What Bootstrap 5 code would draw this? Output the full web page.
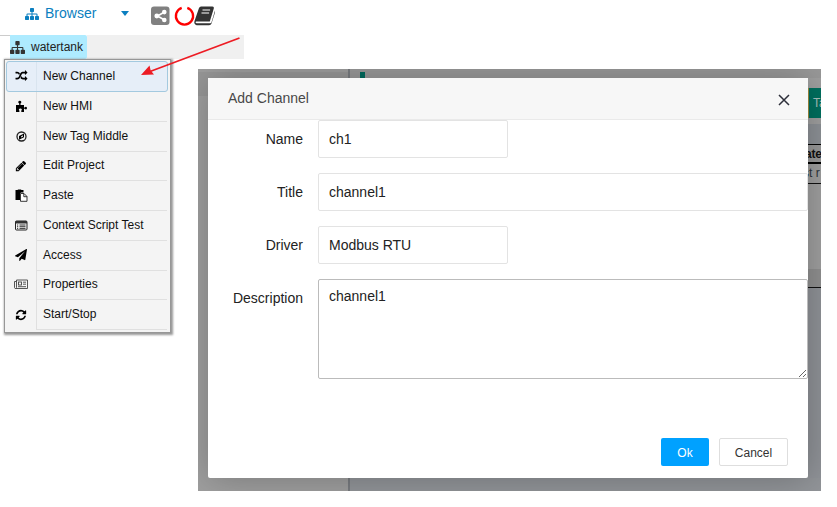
<!DOCTYPE html>
<html lang="en">
<head>
<meta charset="utf-8">
<title>Add Channel</title>
<link href="https://cdn.jsdelivr.net/npm/bootstrap@5.3.0/dist/css/bootstrap.min.css" rel="stylesheet">
<style>
body{font-family:"Liberation Sans",Arial,sans-serif;font-size:14px;color:#333;background:#fff;width:837px;height:507px}
svg{display:block;flex:none}
.topbar{height:35px;padding:0 0 8px 25px;color:#0b7fc0}
.topbar .caret{margin-left:25px;border:4.5px solid transparent;border-top:5px solid #0b7fc0;border-bottom:0}
.treebar{height:24px;width:244px;font-size:12px}
.treebar .lead-line{width:10px;border-top:1px solid #ccc}
.tree-node{background:#aeebff;width:77px;gap:6px;border-radius:0 2px 2px 0;color:#222}
.tree-rest{background:#f0f0f0}
.ctx{width:167px;height:274px;margin-left:4px;padding:1px;border:1px solid #979797;background:#f4f4f4;box-shadow:1px 1px 2px 1px #999;font-size:12px;color:#111}
.ctx-item{height:29.75px;width:161px}
.ctx-item .ico{width:31px;padding:0 0 1px 9px;border-right:1px solid #e0e0e0}
.ctx-item .lbl{border-bottom:1px solid #e0e0e0;padding:0 0 1px 6px}
.ctx-item.hot{height:31px;width:162px;background:#e6eef8;border:1px solid #a3c9df;border-radius:3px}
.ctx-item.hot .ico{width:30px;padding:0 0 1px 8px;border-color:#d9e4ef}
.ctx-item.hot .lbl{border:0;padding:0 0 2px 6px}
.workspace{width:623px;height:422px;margin:10px 0 0 27px;background:#a0a0a0}
.ws-left{width:150px;background:#9f9f9f}
.ws-left .ws-head{height:27px;background:#979797;border-top:3px solid #9e9e9e}
.ws-split{width:2px;background:#797c80}
.ws-strip{height:9px;padding:3px 0 0 10px;background:#999}
.ws-strip .tab-edge{width:5px;height:6px;background:#006b5e}
.ws-side{width:21px;font-size:12px;line-height:18px;color:#111}
.ws-side>*{padding-left:8px;white-space:nowrap}
.ws-side .tag-tab{height:30px;margin-top:10px;background:linear-gradient(90deg,#00705f 8px,#a08d40 8px,#a08d40 9px,#00705f 9px);color:#a9c0bc;padding:6px 0 0 13px}
.ws-side .gap-a{height:26px;background:linear-gradient(#a0a0a0 6px,#8e9297 6px)}
.ws-side .c-head{height:20px;padding-left:5px;border-top:1px solid #000;border-bottom:2px solid #000;font-weight:bold;background:#9a9a9a;letter-spacing:-.2px}
.ws-side .c-cell{height:20px;padding-left:3px;border-bottom:1px solid #111;color:#2d333a}
.ws-side .gap-b{height:85px;background:#a0a0a0}
.ws-side .gap-c{height:19px;background:#919191;border-bottom:1px solid #111}
.ws-side .gap-d{background:#909398}
.ws-bottom{height:13px;background:#929599}
.dialog{left:10px;top:9px;width:600px;height:400px;background:#fff;border-radius:2px;box-shadow:1px 1px 36px rgba(0,0,0,.25);color:#222}
.dialog-title{height:42px;padding:0 18px 0 20px;background:#f7f7f7;border-bottom:1px solid #eaeaea;color:#484848}
.field{margin-bottom:15px}
.field label{flex:none;width:110px;padding:9px 15px 0 0;text-align:right;line-height:20px}
.dialog .form-control{height:38px;border:1px solid #e3e3e3;border-radius:2px;padding:0 10px;font-size:14px;color:#222;box-shadow:none}
.dialog .form-control.short{width:190px;flex:none}
.dialog textarea.form-control{height:100px;min-height:0;border-color:#bbb;padding:6px 10px;line-height:20px;resize:vertical}
.actions{padding:0 20px 12px 0;gap:10px}
.actions .btn{height:28px;padding:1px 0 0;font-size:12px;border-radius:2px;line-height:24px}
.ok{width:48px;background:#00a1ff;color:#fff}
.cancel{width:69px;background:#fff;border-color:#dedede;color:#333}
.pointer{left:136px;top:32px}
</style>
</head>
<body class="overflow-hidden position-relative">
<svg width="0" height="0" class="position-absolute"><defs>
<path id="sitemap" d="M1792 1248v320q0 40-28 68t-68 28h-320q-40 0-68-28t-28-68v-320q0-40 28-68t68-28h96v-192h-512v192h96q40 0 68 28t28 68v320q0 40-28 68t-68 28h-320q-40 0-68-28t-28-68v-320q0-40 28-68t68-28h96v-192h-512v192h96q40 0 68 28t28 68v320q0 40-28 68t-68 28h-320q-40 0-68-28t-28-68v-320q0-40 28-68t68-28h96v-192q0-52 38-90t90-38h512v-192h-96q-40 0-68-28t-28-68v-320q0-40 28-68t68-28h320q40 0 68 28t28 68v320q0 40-28 68t-68 28h-96v192h512q52 0 90 38t38 90v192h96q40 0 68 28t28 68z"/>
</defs></svg>

<header class="topbar d-flex align-items-center">
  <svg width="14" height="14" viewBox="0 0 1792 1792" fill="currentColor"><use href="#sitemap"/></svg>
  <span style="margin-left:6px">Browser</span>
  <span class="caret"></span>
  <svg width="66" height="22" viewBox="149 4 66 22" style="margin:4px 0 0 20px">
    <rect x="151" y="5.500" width="18.500" height="18.500" rx="3" fill="#808080"/>
    <path d="M164.500 11l-7 4 7 4" fill="none" stroke="#fff" stroke-width="1.600"/>
    <g fill="#fff"><circle cx="164.300" cy="11.100" r="2.300"/><circle cx="156.800" cy="15" r="2.400"/><circle cx="164.300" cy="19" r="2.300"/></g>
    <path d="M187.300 6.800a8.600 8.600 0 1 1-5.600 0" fill="none" stroke="#f00" stroke-width="2.300"/>
    <path d="M201 5.500h11.500q1.800 0 1.300 2l-4 13H196q-1.300 1 .5 1.700h13.700q1 0 1.300-1L215 9.500v2l-3.500 11q-.6 1.800-2.400 1.800h-12.500q-3.200-1.500-2-4.500L199 7.100q.6-1.600 2-1.600z" fill="#333"/>
    <path d="M202.500 9h7.600M201.500 12h7.600" stroke="#fff" stroke-width="1.200"/>
  </svg>
</header>

<div class="treebar d-flex">
  <div class="lead-line"></div>
  <div class="tree-node d-flex align-items-center">
    <svg width="15" height="15" viewBox="0 0 1792 1792" fill="#333"><use href="#sitemap"/></svg>
    <span>watertank</span>
  </div>
  <div class="tree-rest flex-grow-1"></div>
</div>

<main class="d-flex align-items-start">
  <nav class="ctx">
    <div class="ctx-item hot d-flex"><div class="ico d-flex align-items-center"><svg width="13" height="12" viewBox="0 0 1792 1792"><path d="M666 481q-60 92-137 273-22-45-37-72.500t-40.500-63.500-51-56.500-63-35-81.500-14.500h-224q-14 0-23-9t-9-23v-192q0-14 9-23t23-9h224q250 0 410 225zm1126 799q0 14-9 23l-320 320q-9 9-23 9-13 0-22.500-9.500t-9.500-22.500v-192q-32 0-85 .5t-81 1-73-1-71-5-64-10.500-63-18.500-58-28.500-59-40-55-53.500-56-69.500q59-93 136-273 22 45 37 72.500t40.500 63.500 51 56.500 63 35 81.500 14.500h256v-192q0-14 9-23t23-9q12 0 24 10l319 319q9 9 9 23zm0-896q0 14-9 23l-320 320q-9 9-23 9-13 0-22.500-9.500t-9.500-22.500v-192h-256q-48 0-87 15t-69 45-51 61.500-45 77.500q-32 62-78 171-29 66-49.500 111t-54 105-64 100-74 83-90 68.500-106.500 42-128 16.500h-224q-14 0-23-9t-9-23v-192q0-14 9-23t23-9h224q48 0 87-15t69-45 51-61.500 45-77.500q32-62 78-171 29-66 49.500-111t54-105 64-100 74-83 90-68.500 106.500-42 128-16.500h256v-192q0-14 9-23t23-9q12 0 24 10l319 319q9 9 9 23z"/></svg></div><div class="lbl flex-grow-1 d-flex align-items-center">New Channel</div></div>
    <div class="ctx-item d-flex"><div class="ico d-flex align-items-center"><svg width="13" height="13" viewBox="0 0 13 13"><path d="M1 5h3.200V3.500Q3 2.800 3.300 1.700 3.700.8 4.800.8t1.500.9q.3 1.100-.8 1.800V5H9v2.600h.8q.4-.9 1.200-.8 1 .2 1 1.300T11 9.500q-.8.100-1.200-.7H9V12H6.300v-1.500q.6-.5.500-1.200Q6.500 8.500 5.400 8.500t-1.500.8q-.2.700.5 1.200V12H1z"/></svg></div><div class="lbl flex-grow-1 d-flex align-items-center">New HMI</div></div>
    <div class="ctx-item d-flex"><div class="ico d-flex align-items-center"><svg width="13" height="13" viewBox="0 0 13 13"><circle cx="6.500" cy="6.500" r="4.500" fill="none" stroke="#222" stroke-width="1.300"/><path fill-rule="evenodd" d="M9 3.500v3.800L4 9.800V6zM7.900 5.300L6.200 6.200v1.400l1.700-.9z"/></svg></div><div class="lbl flex-grow-1 d-flex align-items-center">New Tag Middle</div></div>
    <div class="ctx-item d-flex"><div class="ico d-flex align-items-center"><svg width="12" height="12" viewBox="0 0 1792 1792"><path d="M491 1536l91-91-235-235-91 91v107h128v128h107zm523-928q0-22-22-22-10 0-17 7l-542 542q-7 7-7 17 0 22 22 22 10 0 17-7l542-542q7-7 7-17zm-54-192l416 416-832 832h-416v-416zm683 96q0 53-37 90l-166 166-416-416 166-165q36-38 90-38 53 0 91 38l235 234q37 39 37 91z"/></svg></div><div class="lbl flex-grow-1 d-flex align-items-center">Edit Project</div></div>
    <div class="ctx-item d-flex"><div class="ico d-flex align-items-center"><svg width="13" height="13" viewBox="0 0 13 13"><path d="M.5 1h2.300V.5h3.400V1h2.300v2.500H6L5 4.500V11H.5z"/><path d="M5.500 4.500H9L12 7.500v4.800H5.500zM8.800 4.700v3H12" fill="#fff" stroke="#222" stroke-width=".9"/></svg></div><div class="lbl flex-grow-1 d-flex align-items-center">Paste</div></div>
    <div class="ctx-item d-flex"><div class="ico d-flex align-items-center"><svg width="13" height="13" viewBox="0 0 13 13"><rect x=".5" y="2" width="11.500" height="9" rx="1" fill="none" stroke="#222"/><path d="M.5 2H12V4.500H.5z" fill="#333"/><path d="M2 6h1.200M4.500 6h6M2 7.700h1.200M4.500 7.700h6M2 9.400h1.200M4.500 9.400h6" stroke="#222" stroke-width=".9"/></svg></div><div class="lbl flex-grow-1 d-flex align-items-center">Context Script Test</div></div>
    <div class="ctx-item d-flex"><div class="ico d-flex align-items-center"><svg width="12" height="12" viewBox="0 0 1792 1792"><path d="M1764 11q33 24 27 64l-256 1536q-5 29-32 45-14 8-31 8-11 0-24-5l-453-185-242 295q-18 23-49 23-13 0-22-4-19-7-30.500-23.500t-11.500-36.500v-349l864-1059-1069 925-395-162q-37-14-40-55-2-40 32-59l1664-960q15-9 32-9 20 0 36 11z"/></svg></div><div class="lbl flex-grow-1 d-flex align-items-center">Access</div></div>
    <div class="ctx-item d-flex"><div class="ico d-flex align-items-center"><svg width="15" height="13" viewBox="0 0 15 13" style="margin-left:-1px" fill="none" stroke="#444" stroke-width=".9"><path d="M2.500 2H13.500v8.500h-12Q.5 10.400.5 9.500V3.500h2M2.500 2v7.500q-.2 1-1 1"/><rect x="4.500" y="4" width="3" height="3"/><path d="M9 4.200h3M9 6.200h3M4 8.700h8"/></svg></div><div class="lbl flex-grow-1 d-flex align-items-center">Properties</div></div>
    <div class="ctx-item d-flex"><div class="ico d-flex align-items-center"><svg width="12" height="12" viewBox="0 0 1792 1792"><path d="M1639 1056q0 5-1 7-64 268-268 434.500t-478 166.500q-146 0-282.500-55t-243.500-157l-129 129q-19 19-45 19t-45-19-19-45v-448q0-26 19-45t45-19h448q26 0 45 19t19 45-19 45l-137 137q71 66 161 102t187 36q134 0 250-65t186-179q11-17 53-117 8-23 30-23h192q13 0 22.500 9.500t9.500 22.500zm25-800v448q0 26-19 45t-45 19h-448q-26 0-45-19t-19-45 19-45l138-138q-148-137-349-137-134 0-250 65t-186 179q-11 17-53 117-8 23-30 23h-199q-13 0-22.500-9.500t-9.500-22.500v-7q65-268 270-434.500t480-166.500q146 0 284 55.500t245 156.500l130-129q19-19 45-19t45 19 19 45z"/></svg></div><div class="lbl flex-grow-1 d-flex align-items-center">Start/Stop</div></div>
  </nav>

  <section class="workspace d-flex position-relative overflow-hidden">
    <div class="ws-left"><div class="ws-head"></div></div>
    <div class="ws-split"></div>
    <div class="flex-grow-1 d-flex flex-column">
      <div class="ws-strip"><div class="tab-edge"></div></div>
      <div class="flex-grow-1 d-flex justify-content-end">
        <div class="ws-side d-flex flex-column">
          <div class="tag-tab flex-shrink-0">Ta</div>
          <div class="gap-a flex-shrink-0"></div>
          <div class="c-head flex-shrink-0">ate</div>
          <div class="c-cell flex-shrink-0">st r</div>
          <div class="gap-b flex-shrink-0"></div>
          <div class="gap-c flex-shrink-0"></div>
          <div class="gap-d flex-grow-1"></div>
        </div>
      </div>
      <div class="ws-bottom"></div>
    </div>

    <div class="dialog position-absolute d-flex flex-column">
      <div class="dialog-title d-flex align-items-center justify-content-between">
        <span>Add Channel</span>
        <svg width="12" height="12" viewBox="0 0 12 12" style="margin-top:3px"><path d="M1 1l10 10M11 1L1 11" stroke="#2d2f3a" stroke-width="1.500"/></svg>
      </div>
      <form class="flex-grow-1">
        <div class="field d-flex"><label for="f-name">Name</label><input id="f-name" class="form-control short" value="ch1"></div>
        <div class="field d-flex"><label for="f-title">Title</label><input id="f-title" class="form-control" value="channel1"></div>
        <div class="field d-flex"><label for="f-driver">Driver</label><input id="f-driver" class="form-control short" value="Modbus RTU"></div>
        <div class="field d-flex mb-0"><label for="f-desc">Description</label><textarea id="f-desc" class="form-control">channel1</textarea></div>
      </form>
      <div class="actions d-flex justify-content-end">
        <button class="btn ok">Ok</button>
        <button class="btn cancel">Cancel</button>
      </div>
    </div>
  </section>
</main>

<svg class="pointer position-absolute" width="108" height="48" viewBox="136 32 108 48"><path d="M239.500 38L150 71.500" stroke="#ed1c24" stroke-width="1.800"/><path d="M141 75l8.500-9.500 1.200 5 3.300 4z" fill="#ed1c24"/></svg>
<script src="https://cdn.jsdelivr.net/npm/bootstrap@5.3.0/dist/js/bootstrap.bundle.min.js"></script>
</body>
</html>
